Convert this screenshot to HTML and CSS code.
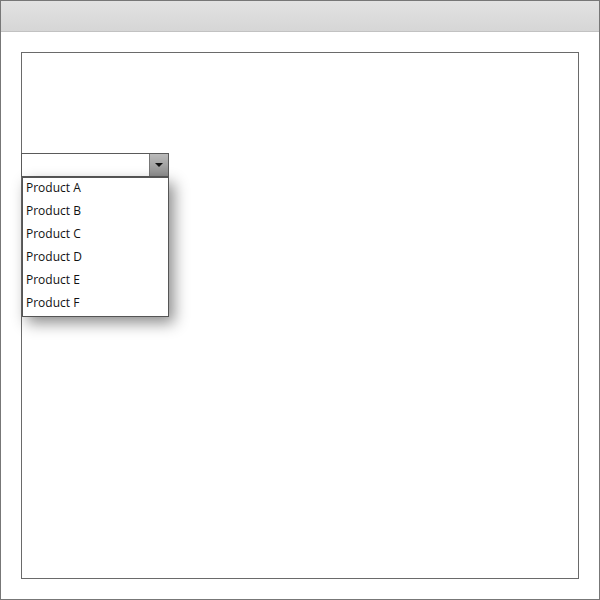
FILE: index.html
```html
<!DOCTYPE html>
<html>
<head>
<meta charset="utf-8">
<link rel="stylesheet" href="styles.css">
</head>
<body>
<div class="window">
  <div class="titlebar"></div>
  <div class="content">
    <div class="panel">
      <div class="combo">
        <div class="combo-field"></div>
        <div class="combo-btn"><span class="arrow"></span></div>
        <ul class="list">
          <li>Product A</li>
          <li>Product B</li>
          <li>Product C</li>
          <li>Product D</li>
          <li>Product E</li>
          <li>Product F</li>
        </ul>
      </div>
    </div>
  </div>
</div>
</body>
</html>
```
FILE: styles.css
```css
html, body { margin: 0; padding: 0; background: #fff; }
body { font-family: "Open Sans", "Noto Sans", sans-serif; }
.window {
  width: 600px; height: 600px; box-sizing: border-box;
  border: 1px solid #777;
  display: flex; flex-direction: column;
}
.titlebar {
  height: 30px;
  background: linear-gradient(#e2e2e2, #d6d6d6);
  border-bottom: 1px solid #c2c2c2;
}
.content {
  flex: 1;
  padding: 20px;
  display: flex;
}
.panel {
  flex: 1;
  border: 1px solid #6a6a6a;
}
.combo {
  position: relative;
  margin-top: 100px;
  margin-left: -1px;
  width: 148px; height: 24px; box-sizing: border-box;
  border: 1px solid #5a5a5a;
  display: flex;
  background: #fff;
}
.combo-field { flex: 1; }
.combo-btn {
  width: 18px;
  background: linear-gradient(#bababa, #8e8e8e);
  border-left: 1px solid #777;
  display: flex; align-items: center; justify-content: center;
}
.arrow {
  width: 0; height: 0;
  border-left: 4px solid transparent;
  border-right: 4px solid transparent;
  border-top: 4px solid #111;
}
.list {
  position: absolute;
  top: 23px; left: 0;
  width: 147px; box-sizing: border-box;
  margin: 0; padding: 0; list-style: none;
  border: 1px solid #555;
  background: #fff;
  box-shadow: 5px 6px 14px rgba(0,0,0,0.45);
}
.list li {
  height: 23px; line-height: 19px;
  padding-left: 3px;
  font-size: 12px; color: #111;
}
```
